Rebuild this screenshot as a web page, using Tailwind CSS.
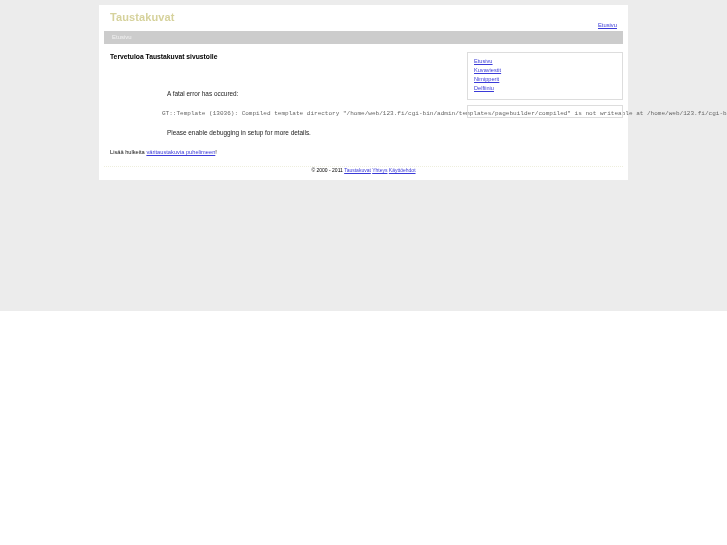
<!DOCTYPE html>
<html><head><meta charset="utf-8"><script src="https://cdn.jsdelivr.net/npm/@tailwindcss/browser@4"></script></head>
<body class="bg-white font-['Liberation_Sans',sans-serif] overflow-hidden">
<div class="h-[311px] bg-[#ececec] pt-[5px]">
  <div class="ml-[99px] w-[529px] h-[175px] bg-white px-[5px] flex flex-col">
    <header class="h-[26px] flex justify-between blur-[0.3px]">
      <div class="pl-[6px] pt-[5px] text-[11px] leading-[14px] font-bold text-[#d6d29c] tracking-[0.1px]">Taustakuvat</div>
      <a class="mt-[16px] mr-[6px] text-[5.8px] leading-[8px] text-[#3a3ad8] underline">Etusivu</a>
    </header>
    <nav class="h-[13px] bg-[#cccccc] pl-[8px] text-[6px] leading-[12px] text-[#f2f2f2]"><span class="inline-block blur-[0.3px]">Etusivu</span></nav>
    <div class="h-[122px] flex">
      <main class="w-[363px] shrink-0 pl-[6px] pt-[8px] relative blur-[0.3px]">
        <h1 class="text-[6.75px] leading-[9px] font-bold text-black">Tervetuloa Taustakuvat sivustolle</h1>
        <p class="ml-[57px] mt-[28px] text-[6.4px] leading-[9px] text-[#222222]">A fatal error has occured:</p>
        <pre class="ml-[52px] mt-[11px] font-['Liberation_Mono',monospace] text-[6.04px] leading-[9px] text-[#666666] whitespace-pre">GT::Template (13036): Compiled template directory "/home/web/123.fi/cgi-bin/admin/templates/pagebuilder/compiled" is not writeable at /home/web/123.fi/cgi-bin</pre>
        <p class="ml-[57px] mt-[10px] text-[6.4px] leading-[9px] text-[#222222]">Please enable debugging in setup for more details.</p>
        <p class="mt-[11px] text-[5.7px] leading-[9px] text-[#111111]">Lisää hulkeita <a class="text-[#3a3ad8] underline">väritaustakuvia puhelimeen</a>!</p>
      </main>
      <aside class="w-[156px] shrink-0 pt-[8px] flex flex-col gap-[5px] relative">
        <div class="h-[48px] border border-[#dddddd] pl-[6px] pt-[4px]">
          <div class="flex flex-col items-start text-[5.6px] leading-[9px] text-[#3a3ad8] underline blur-[0.3px]">
            <a>Etusivu</a><a>Kuvaviestit</a><a>Nimipperit</a><a>Delfiiniu</a>
          </div>
        </div>
        <div class="h-[13px] border border-[#dddddd]"></div>
      </aside>
    </div>
    <footer class="h-[14px] border-t border-dotted border-[#eeeedd] text-center text-[5px] leading-[7px] text-black"><div class="blur-[0.3px]">© 2000 - 2011 <a class="text-[#3a3ad8] underline">Taustakuvat</a> <a class="text-[#3a3ad8] underline">Yhteys</a> <a class="text-[#3a3ad8] underline">Käyttöehdot</a></div></footer>
  </div>
</div>
</body></html>
